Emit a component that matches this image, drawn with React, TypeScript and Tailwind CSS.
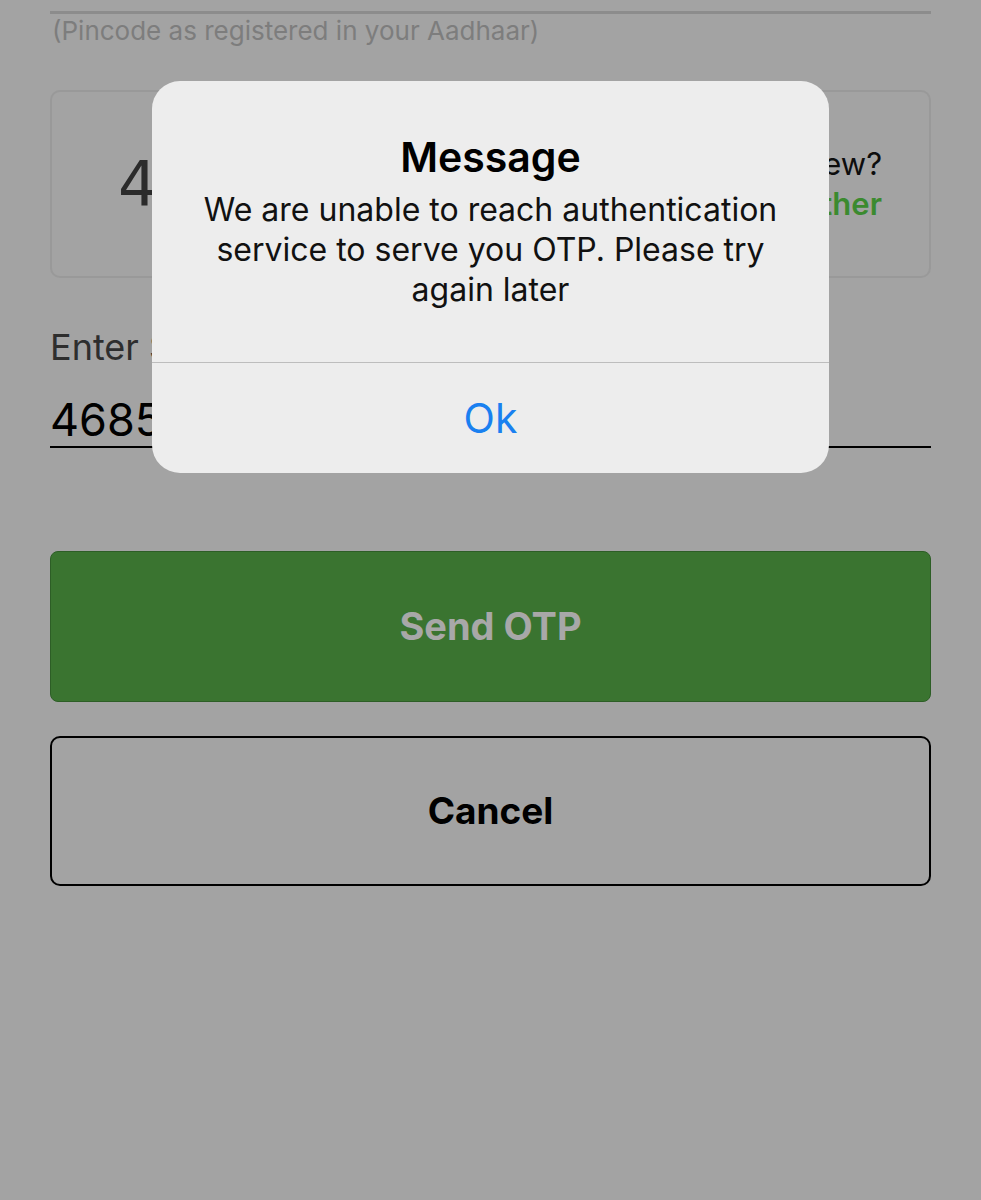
const font = { fontFamily: 'Inter, "Noto Sans", sans-serif' };

function CaptchaBox() {
  return (
    <div className="mt-[45px] h-[188px] rounded-[10px] border-2 border-[#999999] flex items-center justify-between pl-[66px] pr-[47px]">
      <span className="text-[62px] text-[#2b2b2b] tracking-[6px]" style={{ fontFamily: '"DejaVu Sans", sans-serif' }}>
        4k7Xp2
      </span>
      <div className="flex flex-col items-end">
        <span className="text-[31px] leading-[40px] text-[#0d0d0d]">Can't view?</span>
        <span className="text-[31px] leading-[40px] font-semibold text-[#3b8a2f]">Try another</span>
      </div>
    </div>
  );
}

function Alert() {
  return (
    <div className="absolute left-[152px] top-[81px] w-[677px] h-[392px] rounded-[28px] bg-[#ededed] flex flex-col">
      <div className="flex flex-col items-center text-center px-[30px] h-[281px]">
        <div className="mt-[52px] text-[41px] leading-[48px] font-semibold text-black">Message</div>
        <p className="mt-[9px] text-[32px] leading-[40px] text-[#111111]">
          We are unable to reach authentication service to serve you OTP. Please try again later
        </p>
      </div>
      <div className="h-px bg-[#bdbdbd]" />
      <div className="flex-1 flex items-center justify-center">
        <span className="text-[41px] leading-[48px] text-[#1a80f0]">Ok</span>
      </div>
    </div>
  );
}

export default function App() {
  return (
    <div className="relative w-[981px] h-[1200px] bg-[#a3a3a3] overflow-hidden" style={font}>
      <div className="px-[50px] pt-[11px] flex flex-col">
        <div className="h-[3px] bg-[#8c8c8c]" />
        <div className="mt-[3px] text-[26px] leading-[28px] text-[#7d7d7d] pl-[2px]">
          (Pincode as registered in your Aadhaar)
        </div>
        <CaptchaBox />
        <div className="mt-[49px] text-[36px] leading-[40px] text-[#2e2e2e]">Enter Security Code</div>
        <div className="mt-[27px] text-[45px] leading-[52px] text-black">46852k</div>
        <div className="h-[2px] bg-black" />
        <button className="mt-[103px] h-[151px] rounded-[8px] bg-[#3a7430] border border-[#2d5e26] text-[38px] font-bold text-[#a8a8a8]">
          Send OTP
        </button>
        <button className="mt-[34px] h-[150px] rounded-[10px] border-2 border-black text-[37px] font-bold text-black">
          Cancel
        </button>
      </div>
      <Alert />
    </div>
  );
}
